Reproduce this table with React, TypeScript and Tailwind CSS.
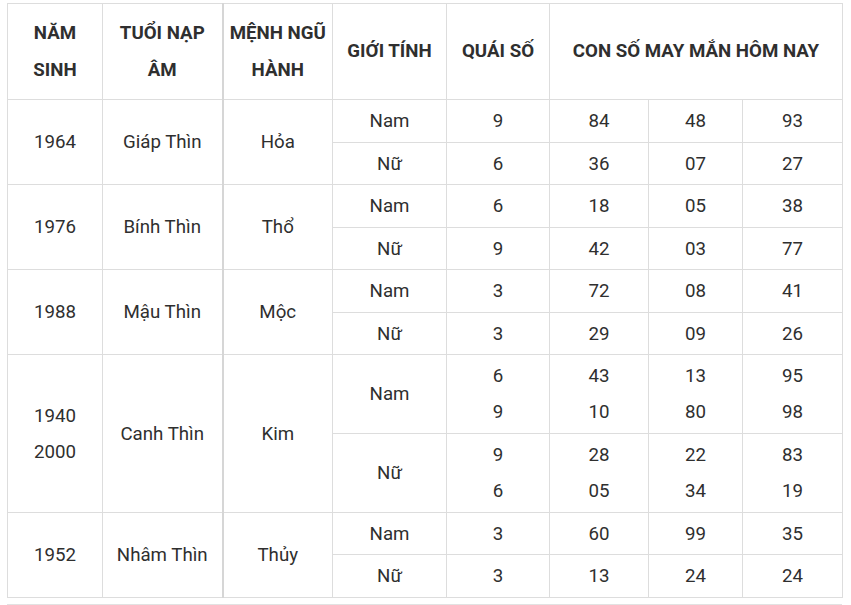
import React from "react";

const td = "border border-[#dddddd] text-center align-middle p-0";
const thick = "border-l-2 border-l-[#d6d6d6]";

type Sub = { g: string; q: string[]; n: string[][]; h: string };
type Group = { year: string[]; tuoi: string; menh: string; subs: Sub[] };

const groups: Group[] = [
  {
    year: ["1964"], tuoi: "Giáp Thìn", menh: "Hỏa",
    subs: [
      { g: "Nam", q: ["9"], n: [["84"], ["48"], ["93"]], h: "h-[43px]" },
      { g: "Nữ", q: ["6"], n: [["36"], ["07"], ["27"]], h: "h-[42px]" },
    ],
  },
  {
    year: ["1976"], tuoi: "Bính Thìn", menh: "Thổ",
    subs: [
      { g: "Nam", q: ["6"], n: [["18"], ["05"], ["38"]], h: "h-[43px]" },
      { g: "Nữ", q: ["9"], n: [["42"], ["03"], ["77"]], h: "h-[42px]" },
    ],
  },
  {
    year: ["1988"], tuoi: "Mậu Thìn", menh: "Mộc",
    subs: [
      { g: "Nam", q: ["3"], n: [["72"], ["08"], ["41"]], h: "h-[43px]" },
      { g: "Nữ", q: ["3"], n: [["29"], ["09"], ["26"]], h: "h-[42px]" },
    ],
  },
  {
    year: ["1940", "2000"], tuoi: "Canh Thìn", menh: "Kim",
    subs: [
      { g: "Nam", q: ["6", "9"], n: [["43", "10"], ["13", "80"], ["95", "98"]], h: "h-[79px]" },
      { g: "Nữ", q: ["9", "6"], n: [["28", "05"], ["22", "34"], ["83", "19"]], h: "h-[79px]" },
    ],
  },
  {
    year: ["1952"], tuoi: "Nhâm Thìn", menh: "Thủy",
    subs: [
      { g: "Nam", q: ["3"], n: [["60"], ["99"], ["35"]], h: "h-[42px]" },
      { g: "Nữ", q: ["3"], n: [["13"], ["24"], ["24"]], h: "h-[43px]" },
    ],
  },
];

function Lines({ items }: { items: string[] }) {
  return (
    <>
      {items.map((t, i) => (
        <div key={i}>{t}</div>
      ))}
    </>
  );
}

export default function App() {
  return (
    <div className="bg-white w-[851px] h-[605px] overflow-hidden pt-[3px] pl-[7px] font-['Roboto',sans-serif] text-[#2f2f2f]">
      <table className="table-fixed border-collapse w-[835px] text-[18.7px] leading-[36px]">
        <colgroup>
          <col className="w-[95px]" />
          <col className="w-[120px]" />
          <col className="w-[110px]" />
          <col className="w-[114px]" />
          <col className="w-[103px]" />
          <col className="w-[99px]" />
          <col className="w-[94px]" />
          <col className="w-[100px]" />
        </colgroup>
        <thead>
          <tr className="h-[96px]">
            <th className={`${td} font-bold leading-[37px]`}>NĂM<br />SINH</th>
            <th className={`${td} font-bold leading-[37px]`}>TUỔI NẠP<br />ÂM</th>
            <th className={`${td} ${thick} font-bold leading-[37px]`}>MỆNH NGŨ<br />HÀNH</th>
            <th className={`${td} font-bold leading-[37px]`}>GIỚI TÍNH</th>
            <th className={`${td} font-bold leading-[37px]`}>QUÁI SỐ</th>
            <th colSpan={3} className={`${td} font-bold leading-[37px]`}>CON SỐ MAY MẮN HÔM NAY</th>
          </tr>
        </thead>
        <tbody>
          {groups.map((g, gi) =>
            g.subs.map((s, si) => (
              <tr key={`${gi}-${si}`} className={s.h}>
                {si === 0 && (
                  <>
                    <td rowSpan={2} className={td}><Lines items={g.year} /></td>
                    <td rowSpan={2} className={td}>{g.tuoi}</td>
                    <td rowSpan={2} className={`${td} ${thick}`}>{g.menh}</td>
                  </>
                )}
                <td className={td}>{s.g}</td>
                <td className={td}><Lines items={s.q} /></td>
                {s.n.map((c, ci) => (
                  <td key={ci} className={td}><Lines items={c} /></td>
                ))}
              </tr>
            ))
          )}
        </tbody>
      </table>
      <div className="w-[835px] mt-[6px] border-t border-[#e2e2e2]" />
    </div>
  );
}
